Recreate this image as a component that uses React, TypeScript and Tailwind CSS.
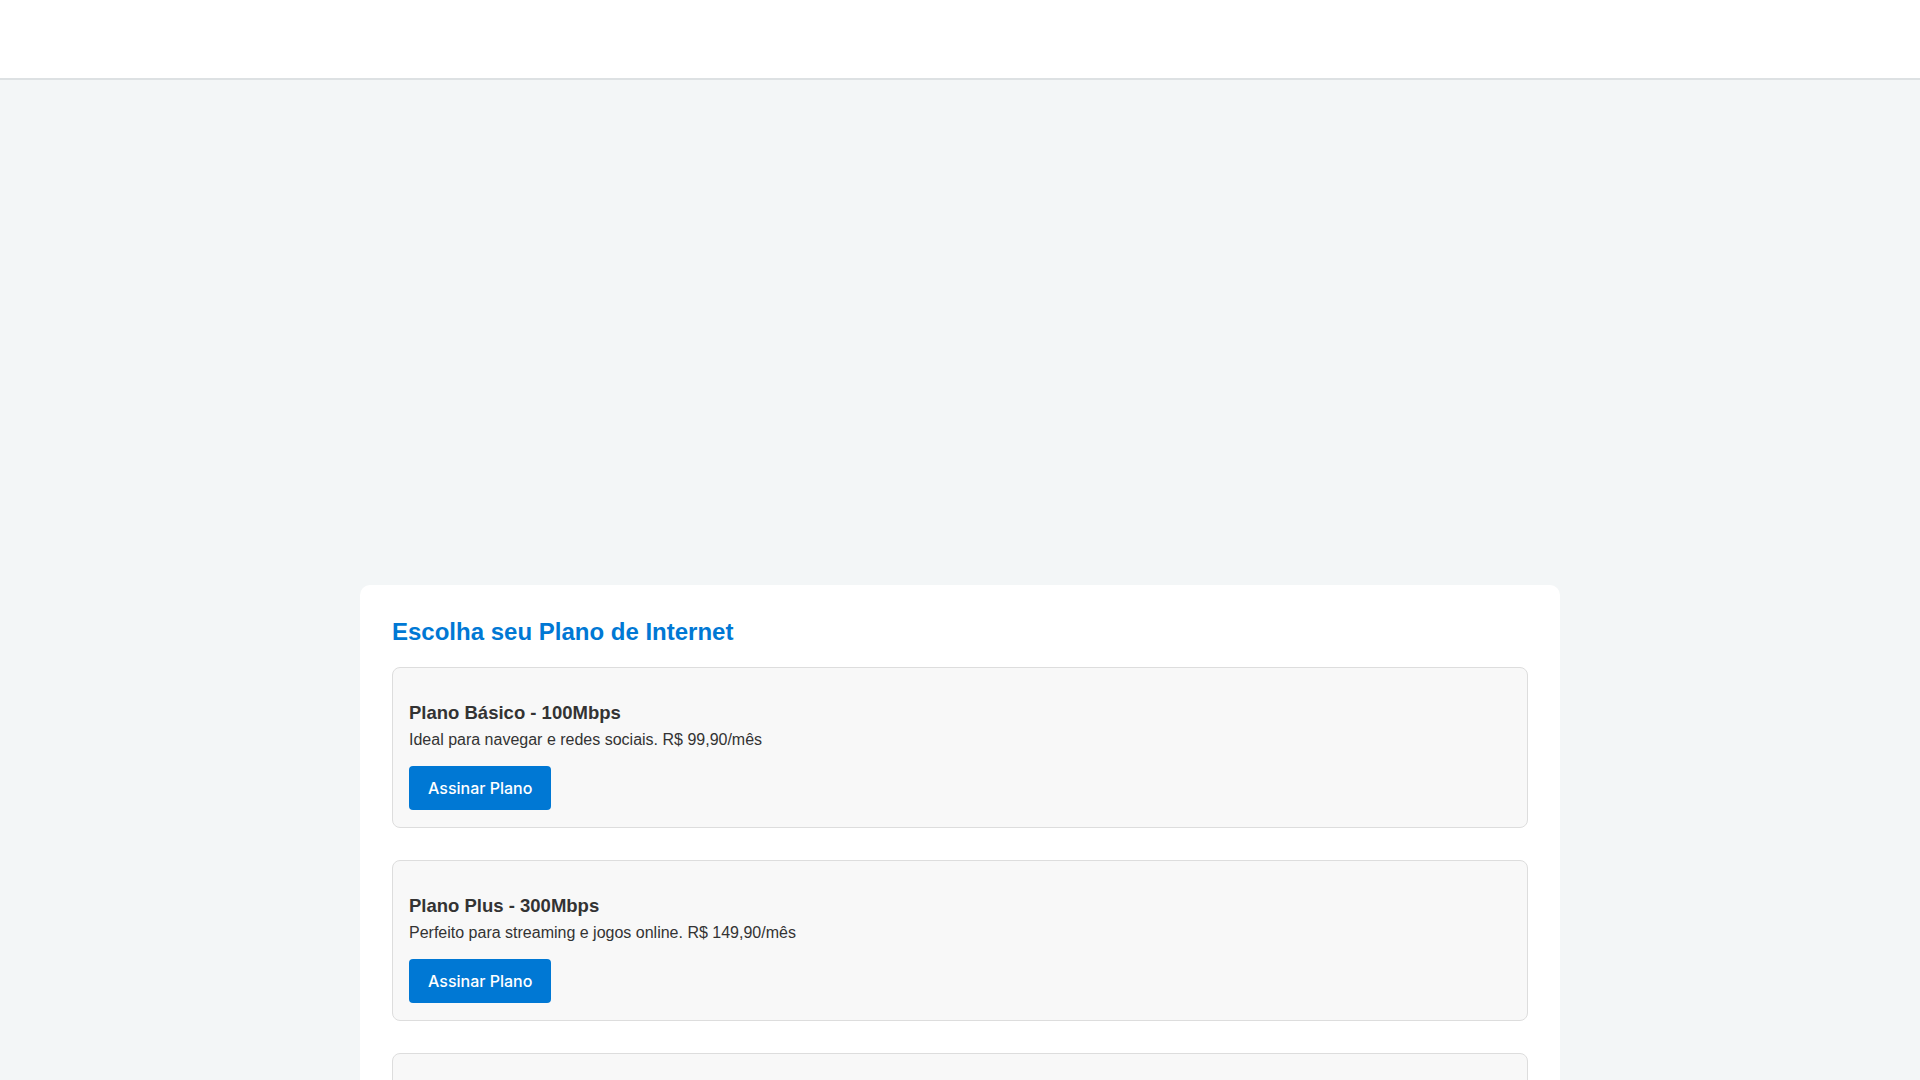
const plans = [
  { name: 'Plano Básico - 100Mbps', desc: 'Ideal para navegar e redes sociais. R$ 99,90/mês' },
  { name: 'Plano Plus - 300Mbps', desc: 'Perfeito para streaming e jogos online. R$ 149,90/mês' },
  { name: 'Plano Premium - 500Mbps', desc: 'Máxima velocidade para toda a família. R$ 199,90/mês' },
];

export default function App() {
  return (
    <div className="h-screen overflow-y-scroll bg-[#f3f6f7] font-[Liberation_Sans,Arial,sans-serif] text-[#333]">
      <header className="h-[80px] bg-white border-b-2 border-[#dde1e3]" />
      <main className="pt-[505px] pb-10">
        <div className="mx-auto w-[1200px] bg-white rounded-[10px] p-8">
          <h2 className="text-[24px] font-bold text-[#0078d4] leading-[30px] mb-[20px]">Escolha seu Plano de Internet</h2>
          <div className="flex flex-col gap-8">
            {plans.map((p) => (
              <div key={p.name} className="bg-[#f8f8f8] border border-[#dddddd] rounded-lg px-4 pt-[34px] pb-[17px]">
                <h3 className="text-[18.5px] font-bold leading-[22px] text-[#333]">{p.name}</h3>
                <p className="text-[16px] leading-[20px] mt-[6px]">{p.desc}</p>
                <button className="mt-[16px] h-[44px] px-[19px] bg-[#0078d4] text-white rounded-[4px] text-[16px] font-medium font-[Inter,sans-serif]">
                  Assinar Plano
                </button>
              </div>
            ))}
          </div>
        </div>
      </main>
    </div>
  );
}
